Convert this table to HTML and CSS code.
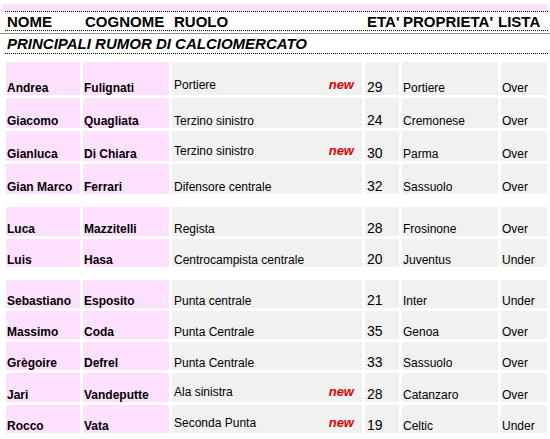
FILE: index.html
```html
<!DOCTYPE html>
<html lang="it">
<head>
<meta charset="utf-8">
<title>Rumor di calciomercato</title>
<link rel="stylesheet" href="styles.css">
</head>
<body>
<div class="topband"></div>
<div class="head">
  <span>NOME</span><span>COGNOME</span><span>RUOLO</span><span>ETA'</span><span>PROPRIETA'</span><span class="lista">LISTA</span>
</div>
<div class="rule"></div>
<div class="title">PRINCIPALI RUMOR DI CALCIOMERCATO</div>

<div class="group">
  <div class="row r33">
    <div class="c nome">Andrea</div><div class="c cog">Fulignati</div>
    <div class="c ruolo"><div class="role has-new"><span>Portiere</span><span class="new">new</span></div></div>
    <div class="c eta">29</div><div class="c prop">Portiere</div><div class="c lista">Over</div>
  </div>
  <div class="row r30">
    <div class="c nome">Giacomo</div><div class="c cog">Quagliata</div>
    <div class="c ruolo"><div class="role"><span>Terzino sinistro</span></div></div>
    <div class="c eta">24</div><div class="c prop">Cremonese</div><div class="c lista">Over</div>
  </div>
  <div class="row r30">
    <div class="c nome">Gianluca</div><div class="c cog">Di Chiara</div>
    <div class="c ruolo"><div class="role has-new"><span>Terzino sinistro</span><span class="new">new</span></div></div>
    <div class="c eta">30</div><div class="c prop">Parma</div><div class="c lista">Over</div>
  </div>
  <div class="row r30">
    <div class="c nome">Gian Marco</div><div class="c cog">Ferrari</div>
    <div class="c ruolo"><div class="role"><span>Difensore centrale</span></div></div>
    <div class="c eta">32</div><div class="c prop">Sassuolo</div><div class="c lista">Over</div>
  </div>
</div>

<div class="group">
  <div class="row r29">
    <div class="c nome">Luca</div><div class="c cog">Mazzitelli</div>
    <div class="c ruolo"><div class="role"><span>Regista</span></div></div>
    <div class="c eta">28</div><div class="c prop">Frosinone</div><div class="c lista">Over</div>
  </div>
  <div class="row r28">
    <div class="c nome">Luis</div><div class="c cog">Hasa</div>
    <div class="c ruolo"><div class="role"><span>Centrocampista centrale</span></div></div>
    <div class="c eta">20</div><div class="c prop">Juventus</div><div class="c lista">Under</div>
  </div>
</div>

<div class="group">
  <div class="row r28">
    <div class="c nome">Sebastiano</div><div class="c cog">Esposito</div>
    <div class="c ruolo"><div class="role"><span>Punta centrale</span></div></div>
    <div class="c eta">21</div><div class="c prop">Inter</div><div class="c lista">Under</div>
  </div>
  <div class="row r28">
    <div class="c nome">Massimo</div><div class="c cog">Coda</div>
    <div class="c ruolo"><div class="role"><span>Punta Centrale</span></div></div>
    <div class="c eta">35</div><div class="c prop">Genoa</div><div class="c lista">Over</div>
  </div>
  <div class="row r28">
    <div class="c nome">Grègoire</div><div class="c cog">Defrel</div>
    <div class="c ruolo"><div class="role"><span>Punta Centrale</span></div></div>
    <div class="c eta">33</div><div class="c prop">Sassuolo</div><div class="c lista">Over</div>
  </div>
  <div class="row r29">
    <div class="c nome">Jari</div><div class="c cog">Vandeputte</div>
    <div class="c ruolo"><div class="role has-new"><span>Ala sinistra</span><span class="new">new</span></div></div>
    <div class="c eta">28</div><div class="c prop">Catanzaro</div><div class="c lista">Over</div>
  </div>
  <div class="row r28">
    <div class="c nome">Rocco</div><div class="c cog">Vata</div>
    <div class="c ruolo"><div class="role has-new"><span>Seconda Punta</span><span class="new">new</span></div></div>
    <div class="c eta">19</div><div class="c prop">Celtic</div><div class="c lista">Under</div>
  </div>
</div>
</body>
</html>
```
FILE: styles.css
```css
html, body {
  margin: 0;
  padding: 0;
  background: #ffffff;
}
body {
  font-family: "Liberation Sans", Arial, sans-serif;
  color: #000;
  width: 550px;
  height: 439px;
  overflow: hidden;
}
.topband {
  margin: 4px 2px 0 3px;
  height: 7px;
  background: #ffe1ff;
}
.head {
  margin: 0 2px 0 5px;
  border-top: 1px dotted #000;
  border-bottom: 1px dotted #000;
  padding-top: 2px;
  height: 16px;
  line-height: 16px;
  font-size: 15px;
  font-weight: bold;
  display: grid;
  grid-template-columns: 78px 89px 193px 36px 95px auto;
  padding-left: 2px;
  white-space: nowrap;
}
.rule {
  margin-top: 2px;
  height: 1px;
  background: #8c8c8c;
}
.title {
  margin: 0 2px 0 5px;
  padding-left: 2px;
  height: 19px;
  line-height: 19px;
  font-size: 15px;
  font-weight: bold;
  font-style: italic;
  border-bottom: 1px dotted #000;
  white-space: nowrap;
}
.group {
  margin: 8px 0 0 6px;
  display: flex;
  flex-direction: column;
  gap: 3px;
}
.group + .group {
  margin-top: 13px;
}
.row {
  display: grid;
  grid-template-columns: 74px 86px 190px 34px 96px 46px;
  column-gap: 3px;
}
.r33 { height: 33px; }
.r30 { height: 30px; }
.r29 { height: 29px; }
.r28 { height: 28px; }
.c {
  display: flex;
  align-items: flex-end;
  font-size: 12px;
  line-height: normal;
  background: #f1f1f1;
  white-space: nowrap;
  padding-left: 1px;
}
.nome, .cog {
  background: #ffe1ff;
  font-weight: bold;
}
.ruolo { padding-left: 2px; }
.eta { padding-left: 2px; font-size: 14px; }
.role {
  display: flex;
  align-items: baseline;
  justify-content: space-between;
  width: 100%;
  padding-right: 8px;
}
.role.has-new { padding-bottom: 3px; }
.new {
  color: #e00000;
  font-weight: bold;
  font-style: italic;
  font-size: 13px;
}
```
